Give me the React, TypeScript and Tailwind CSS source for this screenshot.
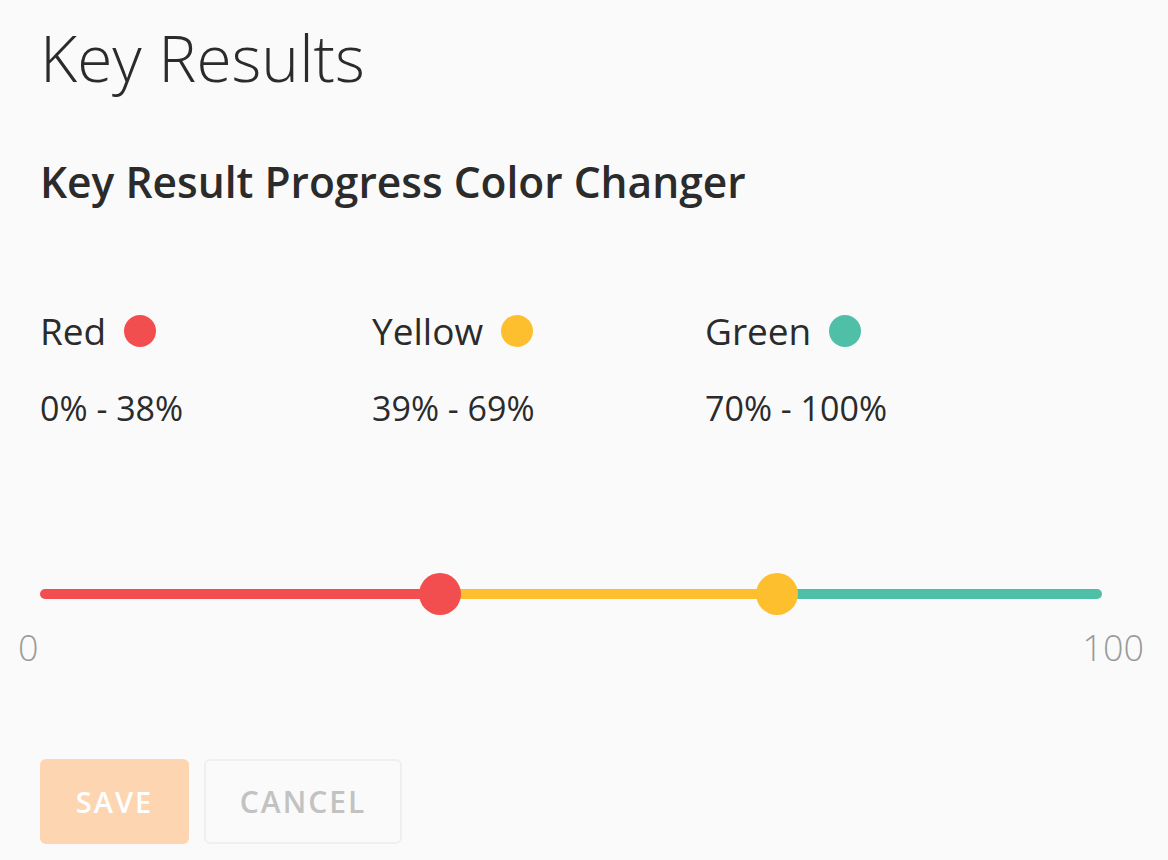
import React from 'react';

const bands = [
  { name: 'Red', range: '0% - 38%', color: 'bg-[#f24e50]' },
  { name: 'Yellow', range: '39% - 69%', color: 'bg-[#febf2f]' },
  { name: 'Green', range: '70% - 100%', color: 'bg-[#4fc0a7]' },
];

// thumb centres along the 1062px track
const low = 37.7;
const high = 69.4;

export default function App() {
  return (
    <div className="min-h-[860px] w-[1168px] bg-[#fafafa] text-[#2b2b2b] font-['Open_Sans',sans-serif] overflow-hidden">
      <div className="px-[40px] pt-[14px]">
        <h1 className="text-[64px] font-light leading-[88px]">Key Results</h1>
        <h2 className="mt-[52px] text-[42.5px] font-semibold leading-[56px]">Key Result Progress Color Changer</h2>

        <div className="mt-[97px] grid grid-cols-[332px_333px_1fr]">
          {bands.map((b) => (
            <div key={b.name}>
              <div className="flex items-center gap-[18px] text-[37px] leading-[48px]">
                <span>{b.name}</span>
                <span className={`h-[32px] w-[32px] rounded-full ${b.color}`} />
              </div>
              <div className="mt-[31px] text-[34px] leading-[44px]">{b.range}</div>
            </div>
          ))}
        </div>
      </div>

      <div className="mt-[143px] px-[40px]">
        <div className="relative h-[42px] w-[1062px]">
          <div className="absolute left-0 right-0 top-[16px] flex h-[10px]">
            <div className="h-full rounded-l-full bg-[#f24e50]" style={{ width: `${low}%` }} />
            <div className="h-full bg-[#febf2f]" style={{ width: `${high - low}%` }} />
            <div className="h-full flex-1 rounded-r-full bg-[#4fc0a7]" />
          </div>
          <div
            className="absolute top-0 h-[42px] w-[42px] -translate-x-1/2 rounded-full bg-[#f24e50]"
            style={{ left: `${low}%` }}
          />
          <div
            className="absolute top-0 h-[42px] w-[42px] -translate-x-1/2 rounded-full bg-[#febf2f]"
            style={{ left: `${high}%` }}
          />
        </div>
      </div>
      <div className="mt-[8px] flex justify-between pl-[18px] pr-[24px] text-[36px] font-light leading-[50px] text-[#9a9a9a]">
        <span>0</span>
        <span>100</span>
      </div>

      <div className="mt-[86px] flex gap-[15px] px-[40px]">
        <button className="h-[85px] w-[149px] rounded-[6px] bg-[#fdd5b1] text-[29px] font-semibold tracking-[2px] text-white">
          SAVE
        </button>
        <button className="h-[85px] w-[198px] rounded-[6px] border-2 border-[#efefef] text-[30px] font-semibold tracking-[2px] text-[#c2c2c2]">
          CANCEL
        </button>
      </div>
    </div>
  );
}
